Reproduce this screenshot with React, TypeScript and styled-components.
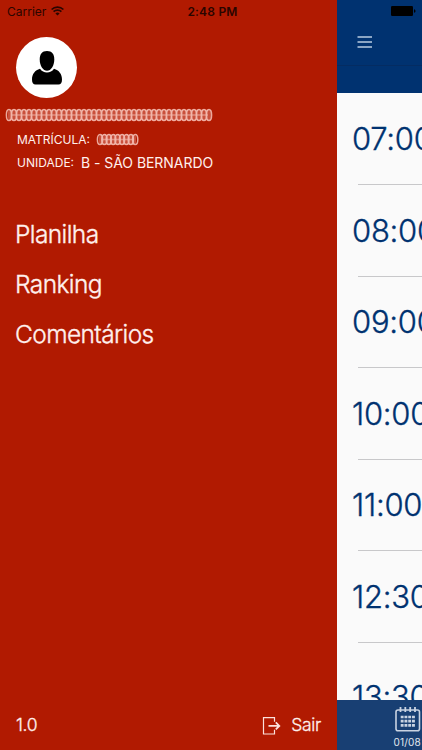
import React from 'react';
import styled, { createGlobalStyle } from 'styled-components';

const GlobalStyle = createGlobalStyle`
  body {
    margin: 0;
    font-family: Inter, 'Liberation Sans', sans-serif;
    -webkit-font-smoothing: antialiased;
  }
`;

const Screen = styled.div`
  position: relative;
  display: flex;
  width: 422px;
  height: 750px;
  overflow: hidden;
  background: #b11a01;
`;

const StatusBar = styled.div`
  position: absolute;
  top: 0;
  left: 0;
  right: 0;
  display: grid;
  grid-template-columns: 1fr auto 1fr;
  align-items: center;
  height: 22px;
  padding: 0 6px 0 7px;
  box-sizing: border-box;
  color: #2a0500;
  font-size: 12px;
`;

const Carrier = styled.div`
  display: flex;
  align-items: center;
  gap: 5px;
`;

const Clock = styled.div`
  padding-left: 2px;
  font-weight: 600;
  letter-spacing: 0.2px;
`;

const BatterySlot = styled.div`
  display: flex;
  justify-content: flex-end;
`;

const Drawer = styled.aside`
  display: flex;
  flex-direction: column;
  flex: 0 0 337px;
  box-sizing: border-box;
  padding-top: 37px;
  color: #fff0ed;
`;

const Avatar = styled.div`
  display: flex;
  align-items: center;
  justify-content: center;
  width: 61px;
  height: 61px;
  margin-left: 16px;
  border-radius: 50%;
  background: #fff;
`;

const HiddenName = styled.div`
  height: 14px;
  margin: 10px 0 6px 5px;
`;

const Info = styled.div`
  display: flex;
  align-items: center;
  height: 23px;
  padding-left: 17px;
`;

const InfoLabel = styled.span<{ $width: number }>`
  width: ${(p) => p.$width}px;
  font-size: 12px;
`;

const InfoValue = styled.span`
  font-size: 14px;
  letter-spacing: -0.05px;
  white-space: nowrap;
`;

const Menu = styled.nav`
  display: flex;
  flex-direction: column;
  margin-top: 35px;
`;

const MenuItem = styled.a`
  height: 50px;
  padding-left: 15px;
  font-size: 24.5px;
  font-weight: 300;
  line-height: 50px;
  letter-spacing: -0.6px;
  -webkit-text-stroke: 0.35px currentColor;
`;

const DrawerFooter = styled.div`
  display: flex;
  align-items: center;
  justify-content: space-between;
  height: 50px;
  margin-top: auto;
  padding: 0 16px 1px;
  box-sizing: border-box;
  font-size: 17.5px;
  font-weight: 300;
  letter-spacing: -0.35px;
  -webkit-text-stroke: 0.3px currentColor;
`;

const Logout = styled.div`
  display: flex;
  align-items: center;
  gap: 10px;

  svg {
    margin-top: 2px;
  }
`;

const Agenda = styled.main`
  display: flex;
  flex-direction: column;
  flex: 0 0 85px;
  overflow: hidden;
  background: #fafafa;
`;

const AgendaHeader = styled.header`
  display: flex;
  align-items: flex-end;
  flex: 0 0 66px;
  box-sizing: border-box;
  padding: 0 0 16px 20px;
  border-bottom: 1px solid #042c62;
  background: #003270;
`;

const HeaderExtension = styled.div`
  flex: 0 0 27px;
  background: #003270;
`;

const Hours = styled.div`
  flex: 1;
  min-height: 0;
  overflow: hidden;
`;

const Hour = styled.div`
  height: 91.6px;
  box-sizing: border-box;
  padding-left: 15px;
  color: #003270;
  font-size: 31px;
  font-weight: 300;
  line-height: 92px;
  letter-spacing: -0.25px;
  white-space: nowrap;
  -webkit-text-stroke: 0.35px currentColor;

  &::after {
    content: '';
    display: block;
    height: 1px;
    margin: -1px 0 0 6px;
    background: #c8c8ca;
  }

  &:last-child {
    padding-top: 8px;
  }
`;

const TabBar = styled.footer`
  display: flex;
  flex-direction: column;
  align-items: flex-end;
  flex: 0 0 50px;
  box-sizing: border-box;
  padding: 6px 1px 0 0;
  background: #183f73;
  color: #e3e8ef;
  font-size: 10px;
`;

const TabLabel = styled.span`
  margin-top: 4px;
  line-height: 12px;
  letter-spacing: 0.2px;
`;

type SmearProps = { width: number; height: number; step: number };

// overlapping outlines that cover the private values
const Smear = ({ width, height, step }: SmearProps) => {
  const marks = Array.from({ length: Math.floor((width - 5) / step) });
  const mid = height / 2;
  return (
    <svg width={width} height={height} style={{ display: 'block', filter: 'blur(0.7px)' }}>
      <rect x="3" y="1.5" width={width - 9} height={height - 3} rx="3" fill="#f6b8ad" opacity="0.35" />
      <g fill="none" stroke="#ffd8d0" strokeWidth="1.5" opacity="0.75">
        {marks.map((_, i) => (
          <ellipse key={i} cx={4 + i * step} cy={mid} rx="2.6" ry={mid - 1.4} />
        ))}
        <path d={`M6 ${mid}H${width - 9}`} opacity="0.6" />
      </g>
    </svg>
  );
};

const WifiIcon = () => (
  <svg width="13" height="10" viewBox="0 0 13 10" fill="none" stroke="#2a0500" strokeWidth="1.7">
    <path d="M0.6 3.5a8.3 8.3 0 0 1 11.8 0M2.6 5.7a5.5 5.5 0 0 1 7.8 0" />
    <path d="M4.4 7.5a3 3 0 0 1 4.2 0L6.5 9.6z" fill="#2a0500" stroke="none" />
  </svg>
);

const BatteryIcon = () => (
  <svg width="25" height="10" viewBox="0 0 25 10">
    <rect width="22" height="10" rx="1.3" />
    <path d="M23 3.2c2 .4 2 3.2 0 3.6z" />
  </svg>
);

const PersonIcon = () => (
  <svg width="30" height="34" viewBox="0 0 30 34">
    <path d="M15 0c5 0 7.3 3.3 7.3 8.4C22.3 14.5 19 19.7 15 19.7S7.7 14.5 7.7 8.4C7.7 3.3 10 0 15 0z" />
    <path d="M8 17.8c1.700 2.500 4.200 3.800 7 3.800s5.300-1.300 7-3.800c5 1.400 8 5.400 8 10.700 0 3.500-1.200 5-3.500 5h-23C1.200 33.500 0 32 0 28.500c0-5.300 3-9.300 8-10.700z" />
  </svg>
);

const MenuIcon = () => (
  <svg width="15" height="14" viewBox="0 0 15 14" stroke="#b8cbe0" strokeWidth="1.5">
    <path d="M0.500 2h14.500M0.500 7h14.500M0.500 12h14.500" />
  </svg>
);

const LogoutIcon = () => (
  <svg width="19" height="19" viewBox="0 0 19 19" fill="none" stroke="#fbe1dc" strokeWidth="1.2">
    <path d="M12.500 5.700V1.700H1.500v16.300h11v-4.200" />
    <path d="M6.500 9.900h10M13.800 6.400l3.500 3.500-3.500 3.500" strokeWidth="1.800" />
  </svg>
);

const CalendarIcon = () => (
  <svg width="26" height="26" viewBox="0 0 26 26" fill="none" stroke="#c9d3e2" strokeWidth="1.6">
    <rect x="1" y="4" width="23.500" height="20.800" rx="2" />
    <path d="M5.500 1v5M10.300 1v5M15.200 1v5M20 1v5" strokeWidth="1.800" />
    <path d="M5.700 11h14.200M5.700 15.200h14.200M5.700 19.400h14.200" strokeWidth="2.700" strokeDasharray="2.900 0.870" />
  </svg>
);

const pages = ['Planilha', 'Ranking', 'Comentários'];
const hours = ['07:00', '08:00', '09:00', '10:00', '11:00', '12:30', '13:30'];

export default function App() {
  return (
    <>
      <GlobalStyle />
      <Screen>
        <Drawer>
          <Avatar>
            <PersonIcon />
          </Avatar>
          <HiddenName>
            <Smear width={212} height={14} step={5} />
          </HiddenName>
          <Info>
            <InfoLabel $width={79}>MATRÍCULA:</InfoLabel>
            <Smear width={46} height={13} step={4.4} />
          </Info>
          <Info>
            <InfoLabel $width={64}>UNIDADE:</InfoLabel>
            <InfoValue>B - SÃO BERNARDO</InfoValue>
          </Info>
          <Menu>
            {pages.map((page) => (
              <MenuItem key={page}>{page}</MenuItem>
            ))}
          </Menu>
          <DrawerFooter>
            <span>1.0</span>
            <Logout>
              <LogoutIcon />
              <span>Sair</span>
            </Logout>
          </DrawerFooter>
        </Drawer>
        <Agenda>
          <AgendaHeader>
            <MenuIcon />
          </AgendaHeader>
          <HeaderExtension />
          <Hours>
            {hours.map((hour) => (
              <Hour key={hour}>{hour}</Hour>
            ))}
          </Hours>
          <TabBar>
            <CalendarIcon />
            <TabLabel>01/08</TabLabel>
          </TabBar>
        </Agenda>
        <StatusBar>
          <Carrier>
            Carrier
            <WifiIcon />
          </Carrier>
          <Clock>2:48 PM</Clock>
          <BatterySlot>
            <BatteryIcon />
          </BatterySlot>
        </StatusBar>
      </Screen>
    </>
  );
}
